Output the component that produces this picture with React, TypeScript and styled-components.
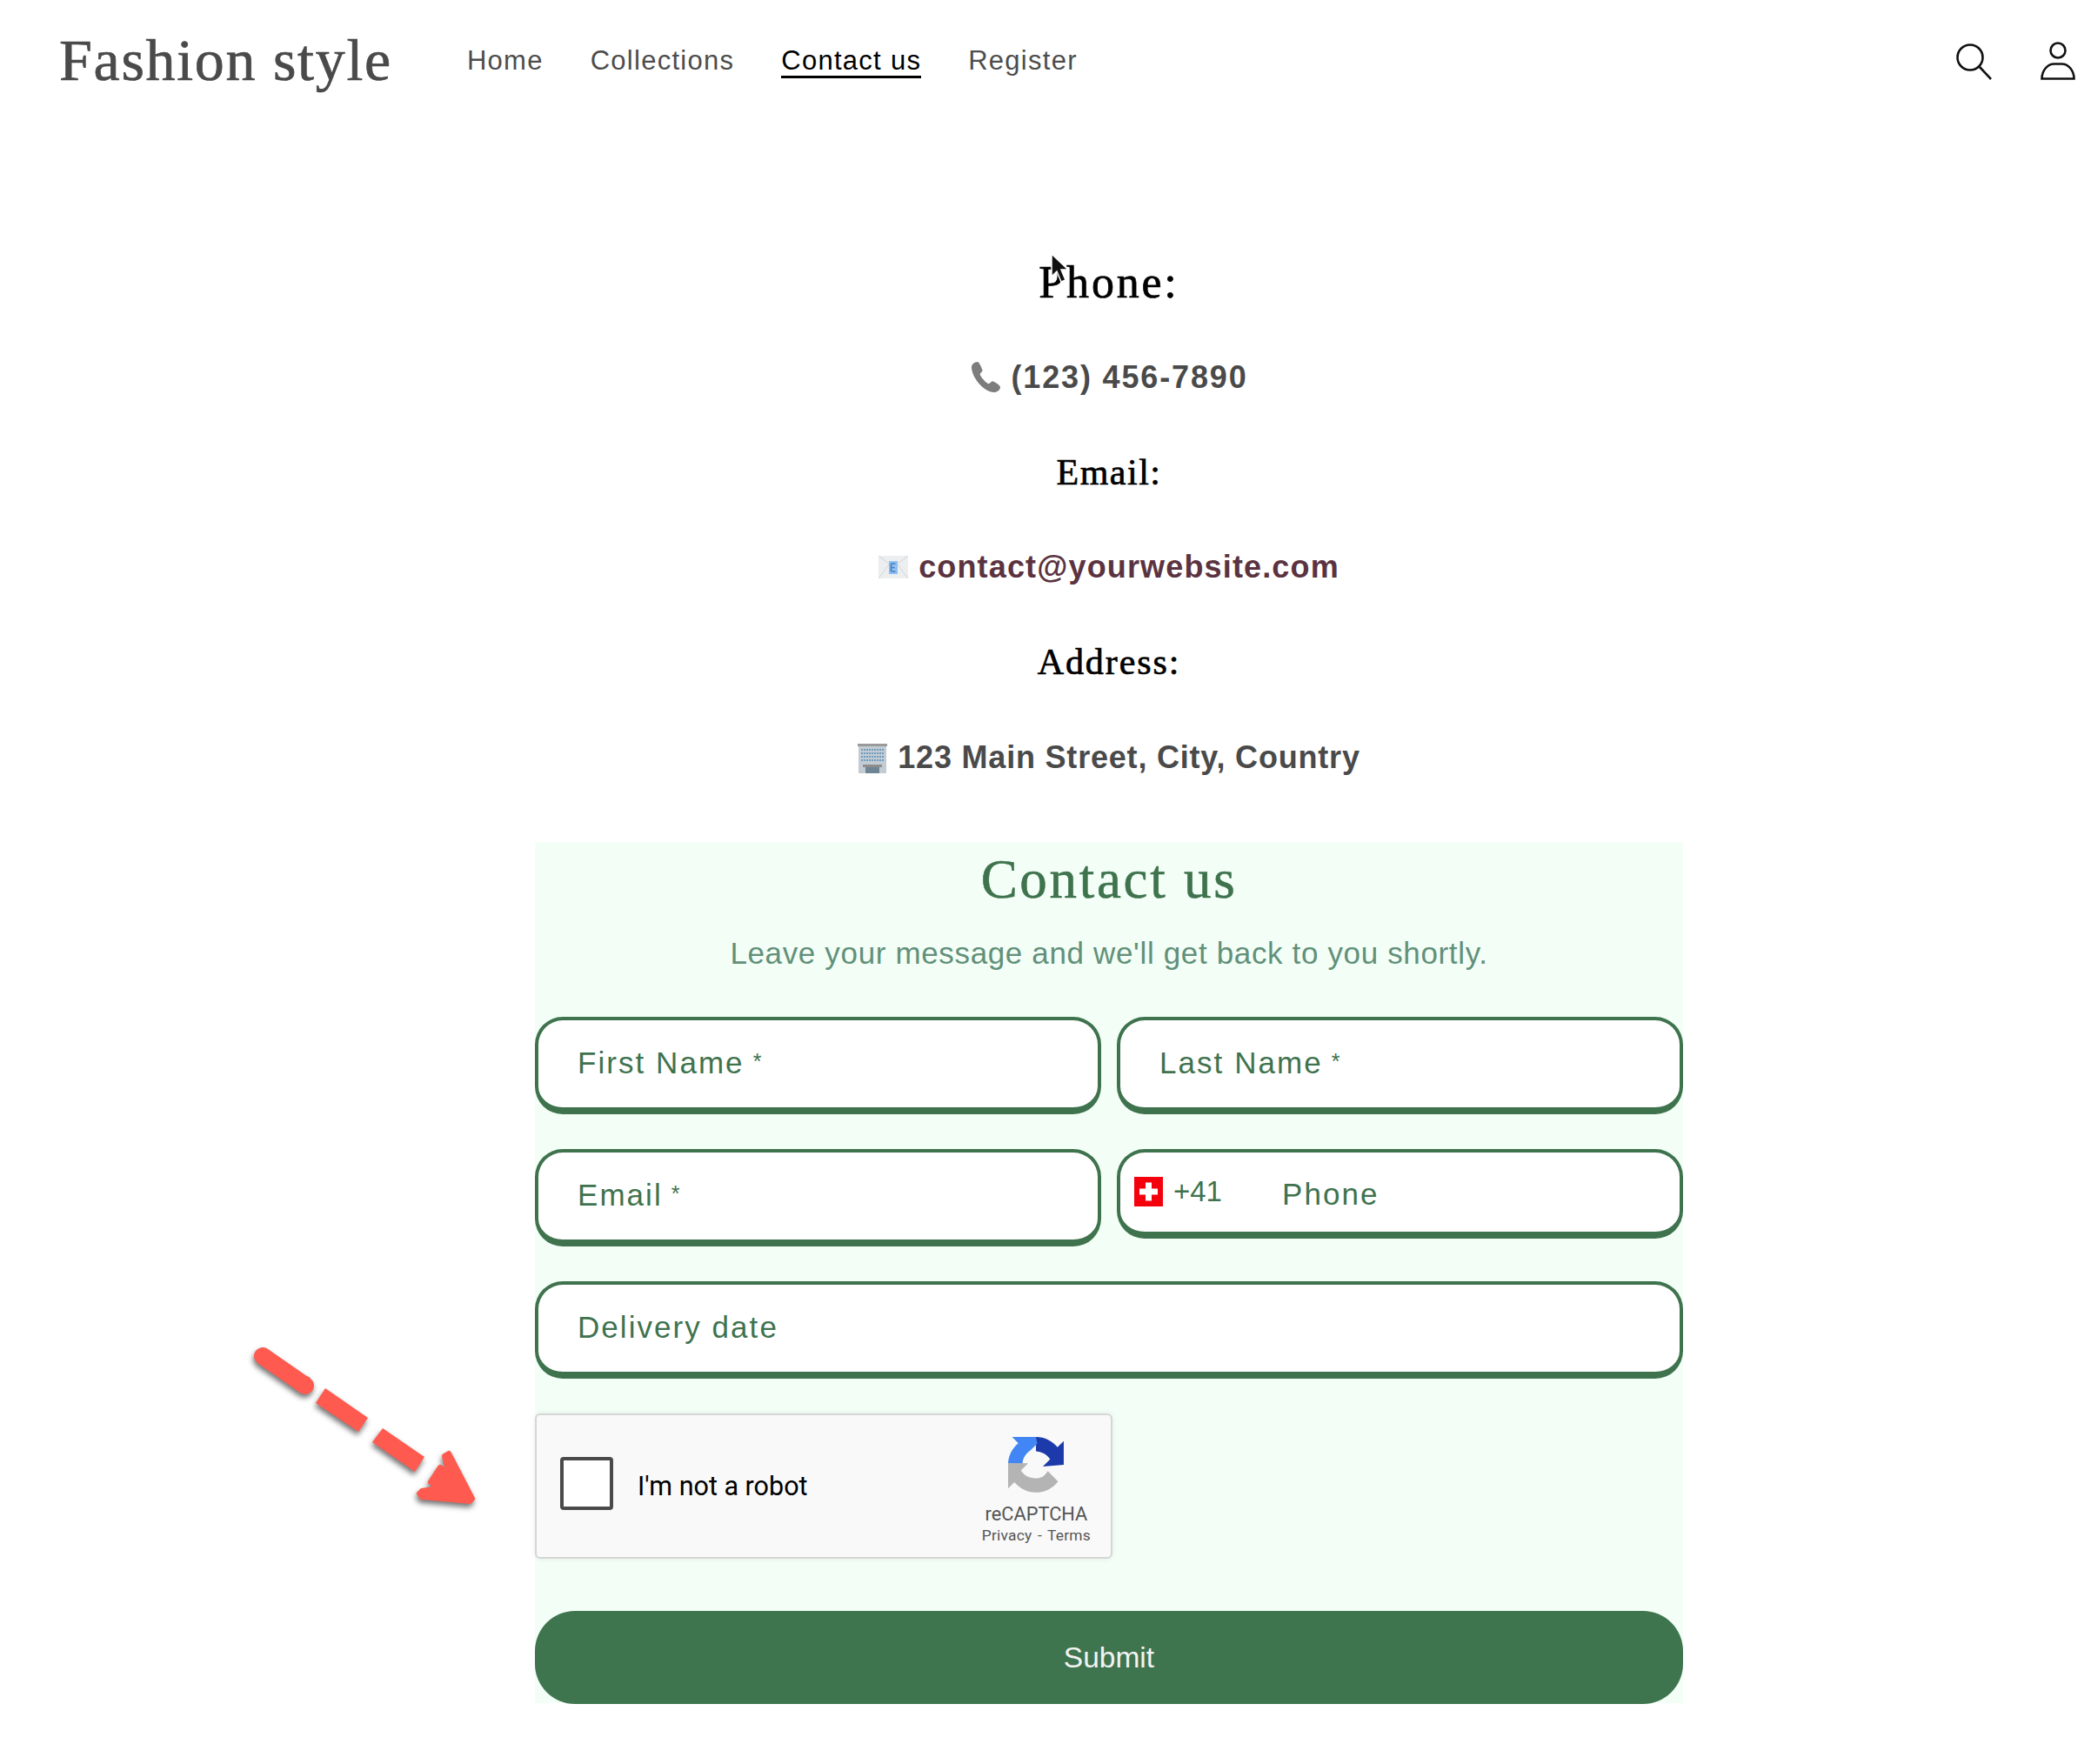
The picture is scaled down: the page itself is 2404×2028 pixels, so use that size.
import React from "react";
import styled, { createGlobalStyle } from "styled-components";

const GlobalStyle = createGlobalStyle`
  html, body {
    margin: 0;
    padding: 0;
    background: #fff;
    font-family: "Liberation Sans", Arial, sans-serif;
  }
`;

const Page = styled.div`
  position: relative;
  width: 2404px;
  height: 2028px;
  overflow: hidden;
  background: #fff;
`;

const Header = styled.header`
  display: flex;
  align-items: center;
  height: 138px;
  padding: 0 17px 0 68px;
  box-sizing: border-box;
`;

const Logo = styled.div`
  font-family: "Liberation Serif", serif;
  font-size: 68px;
  line-height: 1;
  letter-spacing: 1.7px;
  color: #4a4a4a;
  white-space: nowrap;
  -webkit-text-stroke: 0.7px #4a4a4a;
`;

const Nav = styled.nav`
  display: flex;
  gap: 54px;
  margin-left: 86px;
`;

const NavLink = styled.a<{ $active?: boolean }>`
  padding-top: 5px;
  font-size: 31px;
  letter-spacing: 1.27px;
  line-height: 34px;
  color: ${(props) => (props.$active ? "#000" : "#4d4d4d")};
  border-bottom: 3px solid ${(props) => (props.$active ? "#000" : "transparent")};
`;

const Icons = styled.div`
  display: flex;
  align-items: center;
  gap: 52px;
  margin-left: auto;
`;

const Main = styled.main`
  display: flex;
  flex-direction: column;
  align-items: center;
  padding: 132px 0 0 146px;
`;

const Info = styled.div`
  display: grid;
  grid-auto-rows: 109.2px;
  align-items: center;
  justify-items: center;
`;

const InfoHeading = styled.h2<{ $size: number; $tracking: number }>`
  margin: 0;
  font-family: "Liberation Serif", serif;
  font-size: ${(props) => props.$size}px;
  font-weight: 400;
  letter-spacing: ${(props) => props.$tracking}px;
  color: #000;
  -webkit-text-stroke: 0.7px #000;
`;

const InfoValue = styled.p<{ $link?: boolean; $tracking: number }>`
  display: flex;
  align-items: center;
  gap: 12px;
  margin: 0;
  font-size: 36px;
  font-weight: 700;
  letter-spacing: ${(props) => props.$tracking}px;
  color: ${(props) => (props.$link ? "#5b3340" : "#4a4a4a")};
`;

const Panel = styled.section`
  position: relative;
  width: 1320px;
  height: 990px;
  margin-top: 43px;
  background: #f3fff6;
`;

const Title = styled.h1`
  margin: 0;
  height: 86px;
  font-family: "Liberation Serif", serif;
  font-size: 63px;
  font-weight: 400;
  line-height: 86px;
  letter-spacing: 2.7px;
  text-align: center;
  color: #3f734e;
  -webkit-text-stroke: 0.6px #3f734e;
`;

const Subtitle = styled.p`
  margin: 12px 0 43px;
  font-size: 35px;
  line-height: 60px;
  letter-spacing: 0.65px;
  text-align: center;
  color: #62907a;
`;

const Fields = styled.div`
  display: grid;
  grid-template-columns: 1fr 1fr;
  column-gap: 18px;
  row-gap: 40px;
`;

const Field = styled.div<{ $wide?: boolean; $short?: boolean }>`
  display: flex;
  align-items: center;
  grid-column: ${(props) => (props.$wide ? "1 / -1" : "auto")};
  height: ${(props) => (props.$short ? "103px" : "112px")};
  box-sizing: border-box;
  padding: ${(props) => (props.$short ? "4px 0 0 46px" : "0 0 3px 45px")};
  background: #fff;
  border: 4px solid #3f734e;
  border-bottom-width: 8px;
  border-radius: 32px;
  font-size: 35px;
  letter-spacing: 2.05px;
  color: #3f734e;
`;

const PhoneField = styled(Field)`
  padding-left: 16px;
`;

const Star = styled.span`
  margin-left: 10px;
  font-size: 25px;
  position: relative;
  top: -1px;
`;

const Flag = styled.svg`
  margin-top: -5px;
`;

const DialCode = styled.span`
  margin: -5px 69px 0 12px;
  font-size: 33px;
  letter-spacing: 0;
`;

const Captcha = styled.div`
  display: flex;
  align-items: center;
  width: 664px;
  height: 167px;
  margin-top: 40px;
  box-sizing: border-box;
  padding-left: 27px;
  background: #f9f9f9;
  border: 2px solid #d6d6d6;
  border-radius: 6px;
  box-shadow: 0 0 6px rgba(0, 0, 0, 0.08);
  font-family: Roboto, sans-serif;
`;

const CaptchaBox = styled.div`
  width: 61px;
  height: 61px;
  margin-bottom: 6px;
  box-sizing: border-box;
  background: #fff;
  border: 4px solid #4a4a4a;
  border-radius: 4px;
`;

const CaptchaLabel = styled.span`
  margin: 0 0 1px 28px;
  font-size: 30.5px;
  color: #000;
`;

const CaptchaBrand = styled.div`
  display: flex;
  flex-direction: column;
  align-items: center;
  margin-left: auto;
  padding: 10px 23px 0 0;
  color: #555;
`;

const BrandName = styled.span`
  margin-top: 11px;
  font-size: 21.8px;
  line-height: 27px;
`;

const BrandLinks = styled.span`
  font-size: 17.4px;
  line-height: 22px;
  letter-spacing: 0.2px;
  word-spacing: 2px;
`;

const Submit = styled.button`
  display: block;
  width: 100%;
  height: 107px;
  margin-top: 60px;
  padding: 0;
  border: 0;
  border-radius: 46px;
  background: #3f754e;
  font-family: "Liberation Sans", sans-serif;
  font-size: 33.5px;
  color: #f3f3f3;
`;

const Arrow = styled.svg`
  position: absolute;
  left: -345px;
  top: 561px;
  overflow: visible;
  filter: drop-shadow(-1px 4px 3px rgba(0, 0, 0, 0.55));
`;

const Cursor = styled.svg`
  position: absolute;
  left: 1206px;
  top: 289px;
`;

const SearchIcon = () => (
  <svg width="47" height="46" viewBox="0 0 47 46" fill="none" stroke="#111" strokeWidth="2.6">
    <circle cx="19" cy="20" r="14.5" />
    <path d="M29.5 30.5L43 45" />
  </svg>
);

const PersonIcon = () => (
  <svg width="42" height="46" viewBox="0 0 42 46" fill="none" stroke="#111" strokeWidth="2.6">
    <circle cx="21" cy="12" r="8.5" />
    <path d="M2.5 44.5c0-10 7-17 14-17h9c7 0 14 7 14 17z" />
  </svg>
);

const PhoneEmoji = () => (
  <svg width="35" height="35" viewBox="0 0 36 36">
    <path
      d="M2 6c0-3 4-6 7-6 2 0 5 7 6 10 0 2-3 3-3 5 1 3 7 10 10 11 2 0 3-3 5-3 3 1 9 5 9 7 0 3-4 6-7 6C16 36 2 18 2 6z"
      fill="#7d7d7d"
    />
  </svg>
);

const MailEmoji = () => (
  <svg width="34" height="26" viewBox="0 0 34 26">
    <rect width="34" height="26" fill="#eceef0" />
    <path d="M0 0l17 13L34 0M0 26l12-16M34 26L22 10" fill="none" stroke="#d2d5d8" strokeWidth="1" />
    <rect x="12" y="6" width="10" height="15" fill="#8fc0f5" />
    <path d="M14.5 9h5M14.5 13.500h4M14.500 18h5M14.500 9v9" fill="none" stroke="#4d7fb8" strokeWidth="1.600" />
  </svg>
);

const OfficeEmoji = () => (
  <svg width="34" height="36" viewBox="0 0 34 36">
    <rect y="2" width="34" height="3" fill="#9a9a9a" />
    <rect x="1" y="5" width="32" height="31" fill="#c3ccd3" />
    <path
      d="M4 9h26M4 13h26M4 17h26M4 21h26"
      stroke="#6e9cc0"
      strokeWidth="2"
      strokeDasharray="2 1"
      fill="none"
    />
    <rect x="6" y="26" width="22" height="3" fill="#8d8d8d" />
    <rect x="9" y="29" width="16" height="7" fill="#6f8594" />
  </svg>
);

const FlagIcon = () => (
  <Flag width="33" height="34" viewBox="0 0 33 34">
    <rect width="33" height="34" fill="#f5000d" />
    <path d="M13 6.500h7v7h7v7h-7v7h-7v-7H6v-7h7z" fill="#fff" />
  </Flag>
);

const CaptchaLogo = () => (
  <svg width="64" height="64" viewBox="0 0 64 64">
    <path
      d="M64 31.955l-.033-1.37V4.687l-7.16 7.16C50.948 4.674 42.033.093 32.05.093v16.460c.606 0 1.074.07 1.418.202 6.216.49 11.604 3.920 14.776 8.898l-8.306 8.306 24.060-2.004"
      fill="#1c3aa9"
    />
    <path
      d="M31.862 0l-1.370.033H4.594l7.160 7.160C4.580 13.052 0 21.967 0 31.950h16.260c0-.606.070-1.074.202-1.418.490-6.216 3.920-11.604 8.898-14.776l8.306-8.306L31.862 0"
      fill="#4285f4"
    />
    <path
      d="M0 31.950l.033 1.370v25.900l7.160-7.160c5.860 7.173 14.774 11.754 24.758 11.754 10.400 0 19.622-4.960 25.458-12.640L45.673 39.300a15.550 15.550 0 0 1-4.754 5.334c-2.050 1.600-4.952 2.906-9.968 2.906-.606 0-1.074-.070-1.418-.202-6.216-.490-11.604-3.920-14.776-8.898l8.306-8.306L0 29.950"
      fill="#b4b4b4"
    />
  </svg>
);

const ArrowDrawing = () => (
  <Arrow width="300" height="220" viewBox="0 0 300 220">
    <g fill="#ff5a4f" stroke="#ff5a4f" strokeLinejoin="round">
      <path d="M32 30L81 64" fill="none" strokeWidth="20" strokeLinecap="round" />
      <path d="M69 47L87 55L75 72L60 60z" strokeWidth="0" />
      <path d="M104 67L153 101L142 117L93 84z" strokeWidth="0" />
      <path d="M170 113L218 146L207 163L158 129z" strokeWidth="0" />
      <path
        d="M241 145L246 142L273 194L270 197L215 192L212 188L215 185L234 182L225 175L236 158L246 165z"
        strokeWidth="6"
      />
    </g>
  </Arrow>
);

const App: React.FC = (): JSX.Element => {
  return (
    <Page>
      <GlobalStyle />
      <Header>
        <Logo>Fashion style</Logo>
        <Nav>
          <NavLink>Home</NavLink>
          <NavLink>Collections</NavLink>
          <NavLink $active>Contact us</NavLink>
          <NavLink>Register</NavLink>
        </Nav>
        <Icons>
          <SearchIcon />
          <PersonIcon />
        </Icons>
      </Header>
      <Main>
        <Info>
          <InfoHeading $size={52} $tracking={2.8}>Phone:</InfoHeading>
          <InfoValue $tracking={1.85}>
            <PhoneEmoji />
            (123) 456-7890
          </InfoValue>
          <InfoHeading $size={42} $tracking={1.5}>Email:</InfoHeading>
          <InfoValue $link $tracking={1.15}>
            <MailEmoji />
            contact@yourwebsite.com
          </InfoValue>
          <InfoHeading $size={42} $tracking={1.9}>Address:</InfoHeading>
          <InfoValue $tracking={0.8}>
            <OfficeEmoji />
            123 Main Street, City, Country
          </InfoValue>
        </Info>
        <Panel>
          <Title>Contact us</Title>
          <Subtitle>Leave your message and we'll get back to you shortly.</Subtitle>
          <Fields>
            <Field>
              First Name<Star>*</Star>
            </Field>
            <Field>
              Last Name<Star>*</Star>
            </Field>
            <Field>
              Email<Star>*</Star>
            </Field>
            <PhoneField $short>
              <FlagIcon />
              <DialCode>+41</DialCode>
              Phone
            </PhoneField>
            <Field $wide>Delivery date</Field>
          </Fields>
          <Captcha>
            <CaptchaBox />
            <CaptchaLabel>I'm not a robot</CaptchaLabel>
            <CaptchaBrand>
              <CaptchaLogo />
              <BrandName>reCAPTCHA</BrandName>
              <BrandLinks>Privacy - Terms</BrandLinks>
            </CaptchaBrand>
          </Captcha>
          <Submit>Submit</Submit>
          <ArrowDrawing />
        </Panel>
      </Main>
      <Cursor width="26" height="40" viewBox="0 0 26 40">
        <path d="M3 3v26l6-6 5 12 5-2-5-12h8z" fill="#111" stroke="#fff" strokeWidth="1.500" />
      </Cursor>
    </Page>
  );
};

export default App;
